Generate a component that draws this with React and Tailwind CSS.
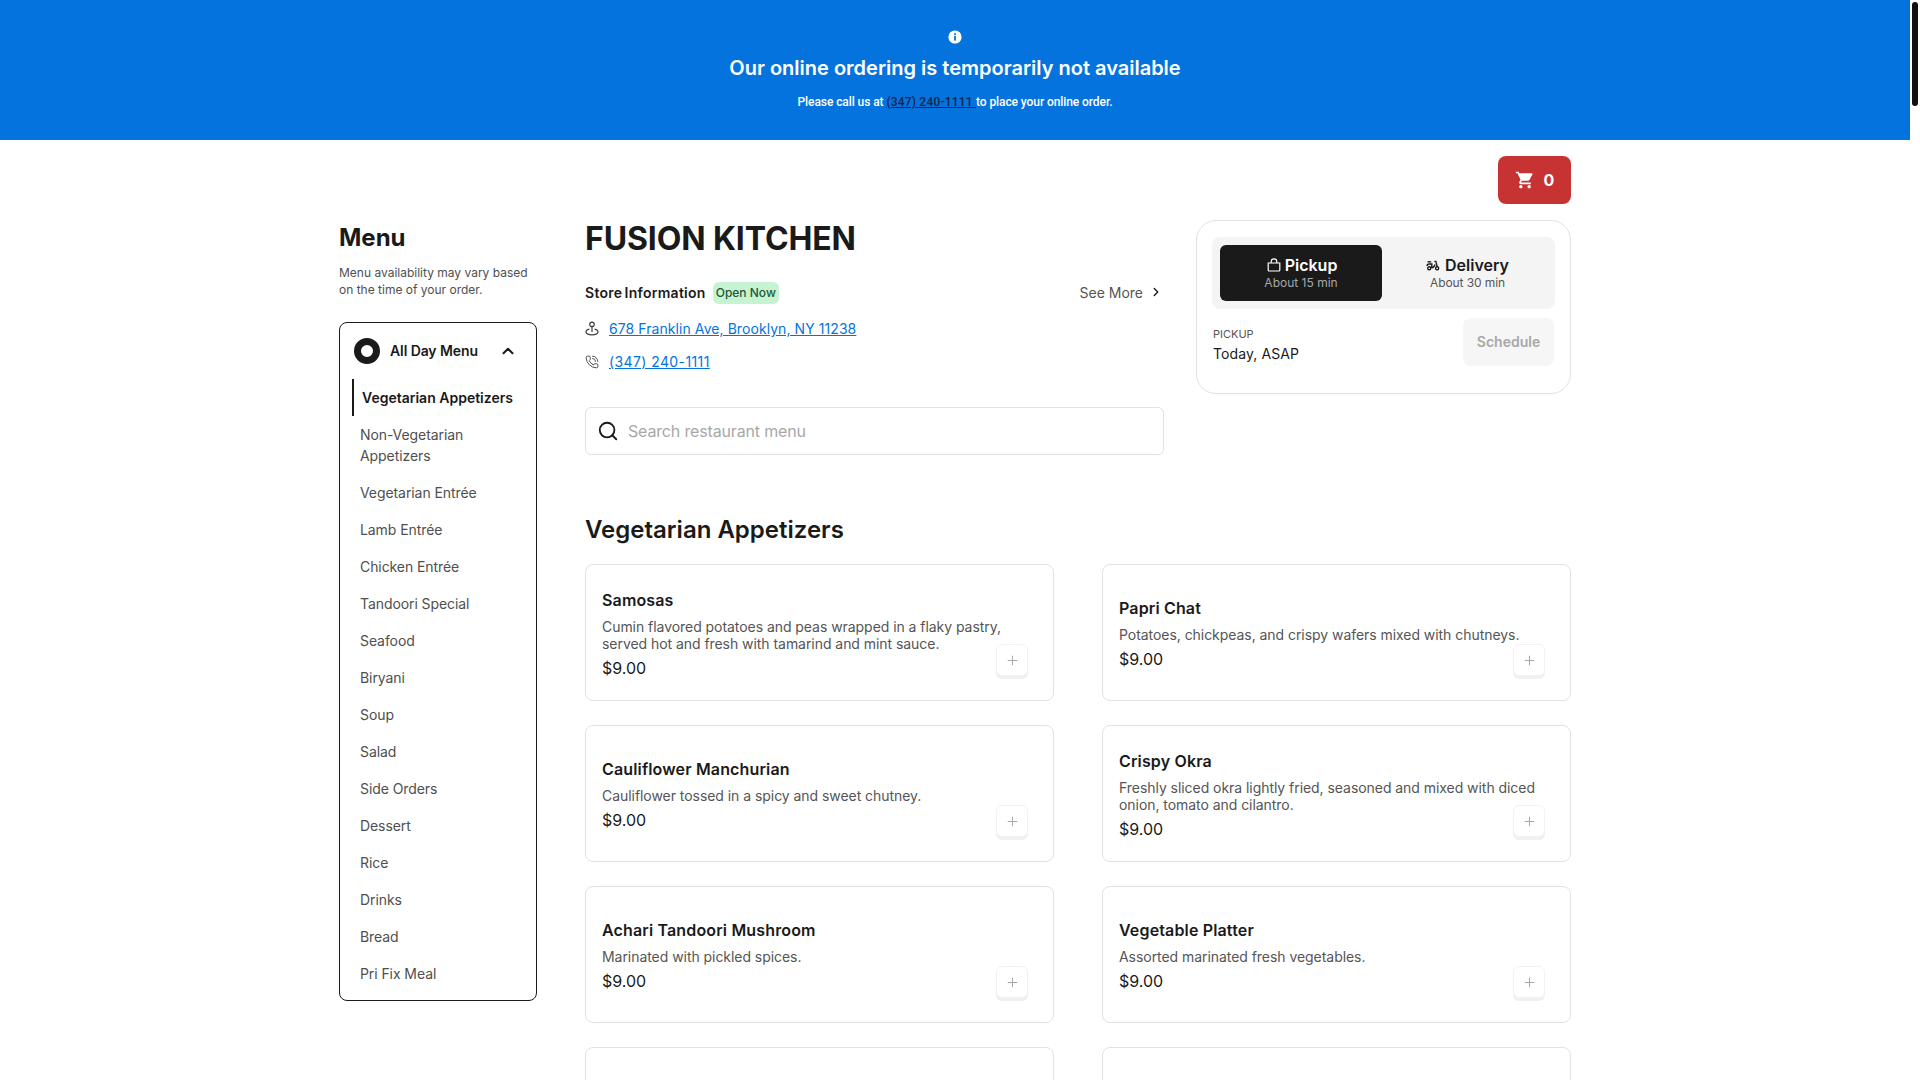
import React from "react";
import { MdShoppingCart } from "react-icons/md";
import { ChevronRight, ChevronUp, Plus, Search, PhoneCall } from "lucide-react";

const cats = ["Non-Vegetarian Appetizers","Vegetarian Entrée","Lamb Entrée","Chicken Entrée","Tandoori Special","Seafood","Biryani","Soup","Salad","Side Orders","Dessert","Rice","Drinks","Bread","Pri Fix Meal"];
const items = [
  ["Samosas","Cumin flavored potatoes and peas wrapped in a flaky pastry, served hot and fresh with tamarind and mint sauce."],
  ["Papri Chat","Potatoes, chickpeas, and crispy wafers mixed with chutneys."],
  ["Cauliflower Manchurian","Cauliflower tossed in a spicy and sweet chutney."],
  ["Crispy Okra","Freshly sliced okra lightly fried, seasoned and mixed with diced onion, tomato and cilantro."],
  ["Achari Tandoori Mushroom","Marinated with pickled spices."],
  ["Vegetable Platter","Assorted marinated fresh vegetables."],
  ["",""],["",""],
];

function Pin(){return(<svg width="14" height="16" viewBox="0 0 14 16" fill="none" stroke="#3f3f3f" strokeWidth="1.2"><circle cx="7" cy="3.4" r="2.3"/><path d="M7 5.7V11"/><path d="M4.3 8.2C2.3 8.7 1 9.6 1 10.8 1 12.6 3.7 13.8 7 13.8s6-1.2 6-3c0-1.2-1.3-2.1-3.3-2.6"/></svg>);}
function Bag(){return(<svg width="14" height="14" viewBox="0 0 14 14" fill="none" stroke="#ffffff" strokeWidth="1.2"><path d="M1.2 5h11.600v7a1 1 0 0 1-1 1H2.200a1 1 0 0 1-1-1z"/><path d="M4.200 5V3.600a2.800 2.800 0 0 1 5.600 0V5"/></svg>);}
function Scooter(){return(<svg width="14" height="11" viewBox="0 0 15 12" fill="none" stroke="#1a1a1a" strokeWidth="1.5"><circle cx="3.400" cy="9" r="1.700"/><circle cx="12" cy="9" r="1.700"/><path d="M1 6.500c0-1.500 1-2.200 2.500-2.200h2.700V8H5.200"/><path d="M1.500 2h4"/><path d="M9 1.500h1.600L12 7"/><path d="M6.200 8.500c2 0 3-1.800 3.600-3.500"/></svg>);}

function Card({title,desc}){
  return (
    <div className="relative h-[137px] rounded-lg border border-[#e2e2e2] bg-white px-4 flex flex-col justify-center">
      {title && <div className="pt-[4px]">
        <div className="text-base font-semibold leading-5 tracking-[0.15px] text-[#1a1a1a]">{title}</div>
        <div className="mt-[8px] text-sm leading-[17px] tracking-[-0.05px] text-[#555555]">{desc}</div>
        <div className="mt-[4px] text-base leading-6 text-[#1a1a1a]">$9.00</div>
      </div>}
      <div className="absolute right-[25px] bottom-6 w-8 h-[32px] rounded-md bg-white border border-[#f2f2f2] shadow-[0_3px_0_#f0f0f0] flex items-center justify-center">
        <Plus size={15} strokeWidth={1.6} color="#a8a8a8"/>
      </div>
    </div>
  );
}

export default function App(){
  return (
    <div className="flex h-screen overflow-hidden bg-white text-[#1a1a1a] font-['Inter',sans-serif]">
      <div className="w-[1910px] shrink-0 overflow-hidden">
        <div className="h-[140px] bg-[#0573de] text-white flex flex-col items-center pt-[30px]">
          <svg width="14" height="14" viewBox="0 0 14 14"><circle cx="7" cy="7" r="6.600" fill="#fff"/><rect x="6.100" y="6" width="1.800" height="4.600" fill="#0573de"/><rect x="6.100" y="3.300" width="1.800" height="1.800" fill="#0573de"/></svg>
          <div className="mt-[10px] text-xl leading-7 font-semibold">Our online ordering is temporarily not available</div>
          <div className="mt-[12px] text-xs leading-4 font-medium tracking-[-0.08px] font-['Roboto',sans-serif]">Please call us at <span className="underline tracking-[0.2px] text-[#16244a]">(347) 240-1111 </span>to place your online order.</div>
        </div>
        <div className="w-[1232px] ml-[339px]">
          <div className="flex justify-end pt-4">
            <div className="w-[73px] h-12 rounded-lg bg-[#c73232] text-white flex items-center justify-center gap-[9px]">
              <MdShoppingCart size={20}/>
              <span className="text-base font-bold">0</span>
            </div>
          </div>
          <div className="flex mt-4 items-start">
            <aside className="w-[198px] shrink-0">
              <h2 className="text-2xl leading-8 font-bold mt-[2px]">Menu</h2>
              <p className="mt-[10px] text-xs leading-[17px] text-[#4f4f4f]">Menu availability may vary based on the time of your order.</p>
              <div className="mt-[24px] h-[679px] rounded-lg border border-[#1a1a1a] px-3">
                <div className="flex items-center h-[56px] pb-[1px]">
                  <div className="ml-[2px] w-[26px] h-[26px] rounded-full border-[7px] border-[#1a1a1a]"/>
                  <span className="ml-[10px] text-sm font-semibold tracking-[-0.1px]">All Day Menu</span>
                  <ChevronUp className="ml-[21px]" size={18} strokeWidth={2.6}/>
                </div>
                <div className="border-l-2 border-[#1a1a1a] h-[37px] flex items-center pl-2 text-sm font-semibold">Vegetarian Appetizers</div>
                <ul className="-mt-2 pl-2 text-sm leading-[21px] tracking-[-0.08px] text-[#4f4f4f]">
                  {cats.map(c=><li key={c} className="mt-4 pr-6">{c}</li>)}
                </ul>
              </div>
            </aside>
            <main className="ml-[48px] flex-1 min-w-0">
              <div className="flex items-start">
                <div className="w-[579px] shrink-0">
                  <h1 className="text-[32px] leading-9 font-bold tracking-[-0.12px] mt-[1px]">FUSION KITCHEN</h1>
                  <div className="flex items-center mt-[24px] h-[24px]">
                    <span className="text-sm font-semibold tracking-[0.27px] [word-spacing:-1.5px]">Store Information</span>
                    <span className="ml-[7px] h-[22px] px-[3px] rounded-md bg-[#c6f3d1] text-[#22583a] text-xs font-medium flex items-center">Open Now</span>
                    <span className="ml-auto text-sm text-[#555555]">See More</span>
                    <ChevronRight className="ml-[6px] mr-[1px] -mt-[2px]" size={14} strokeWidth={2.4}/>
                  </div>
                  <div className="flex items-center mt-[12px] h-[24px] gap-2.5 text-sm tracking-[0.07px]">
                    <Pin/><span className="underline text-[#0573de]">678 Franklin Ave, Brooklyn, NY 11238</span>
                  </div>
                  <div className="flex items-center mt-[9px] h-[24px] gap-2.5 text-sm tracking-[0.4px]">
                    <PhoneCall size={14} strokeWidth={1.5} color="#3a3a3a"/><span className="underline text-[#0573de]">(347) 240-1111</span>
                  </div>
                  <div className="mt-[33px] h-12 rounded-md border border-[#e2e2e2] flex items-center pl-[11px] pr-3">
                    <Search size={22} strokeWidth={2} color="#1a1a1a"/>
                    <span className="ml-[9px] text-base tracking-[-0.16px] text-[#a8a8a8]">Search restaurant menu</span>
                  </div>
                </div>
                <div className="ml-[32px] flex-1 h-[174px] rounded-[20px] border border-[#e2e2e2] px-[15px] pt-4">
                  <div className="h-[72px] rounded-lg bg-[#f4f4f4] flex p-2 pr-0">
                    <div className="w-[162px] rounded-md bg-[#1a1a1a] text-white flex flex-col items-center justify-center">
                      <div className="flex items-center gap-[4px] pl-[2px] text-base leading-5 font-semibold"><Bag/>Pickup</div>
                      <div className="text-xs leading-4 text-[#a8a8a8]">About 15 min</div>
                    </div>
                    <div className="flex-1 flex flex-col items-center justify-center pr-[2px]">
                      <div className="flex items-center gap-[5px] text-base leading-5 font-semibold"><Scooter/>Delivery</div>
                      <div className="text-xs leading-4 tracking-[-0.1px] text-[#555555]">About 30 min</div>
                    </div>
                  </div>
                  <div className="flex items-start justify-between mt-[9px] pl-px pr-px">
                    <div className="pt-[8px]">
                      <div className="text-[11px] leading-4 text-[#555555]">PICKUP</div>
                      <div className="mt-[2px] text-sm leading-5 tracking-[0.1px]">Today, ASAP</div>
                    </div>
                    <div className="w-[91px] h-12 rounded-lg bg-[#f6f6f6] text-[#a8a8a8] text-sm font-semibold flex items-center justify-center">Schedule</div>
                  </div>
                </div>
              </div>
              <h2 className="mt-[59px] text-2xl leading-8 font-semibold">Vegetarian Appetizers</h2>
              <div className="mt-[18px] grid grid-cols-2 gap-x-[48px] gap-y-[24px]">
                {items.map((it,i)=><Card key={i} title={it[0]} desc={it[1]}/>)}
              </div>
            </main>
          </div>
        </div>
      </div>
      <div className="w-[10px] shrink-0 bg-white pt-[2px]">
        <div className="ml-[2px] w-[6px] h-[104px] rounded-full bg-[#111111]"/>
      </div>
    </div>
  );
}
